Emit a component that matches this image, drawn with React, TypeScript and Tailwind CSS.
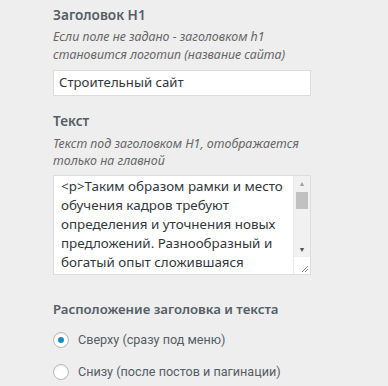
import React from "react";

const font = { fontFamily: '"Noto Sans", "Open Sans", sans-serif' };
const narrow = { fontFamily: 'Roboto, "Noto Sans", sans-serif' };

function Radio({ label, checked }: { label: string; checked?: boolean }) {
  return (
    <label className="flex items-center gap-[9px] h-[20px]">
      <span className="w-[16px] h-[16px] rounded-full border border-[#b4b9be] bg-white flex items-center justify-center shadow-[inset_0_1px_2px_rgba(0,0,0,0.1)]">
        {checked && <span className="w-[6px] h-[6px] rounded-full bg-[#1e8cbe]" />}
      </span>
      <span className="text-[12.6px] text-[#555d66]" style={narrow}>
        {label}
      </span>
    </label>
  );
}

function FakeTextarea({ text }: { text: string }) {
  return (
    <div className="flex h-[100px] w-[258px] border border-[#ddd] bg-white overflow-hidden">
      <div className="flex-1 pl-[7px] pt-[1px] pr-[4px] text-[13.4px] leading-[19px] text-[#32373c] overflow-hidden">
        {text}
      </div>
      <div className="w-[17px] flex flex-col bg-[#f1f1f1] border-l border-[#e8e8e8]">
        <div className="h-[14px] flex items-center justify-center text-[#a3a3a3] text-[7px] pt-[3px]">▲</div>
        <div className="mx-[2px] mt-[2px] h-[17px] bg-[#c1c1c1]" />
        <div className="flex-1" />
        <div className="h-[14px] flex items-center justify-center text-[#505050] text-[7px]">▼</div>
        <div className="h-[17px] bg-white flex items-end justify-end pr-[1px] pb-[1px]">
          <svg width="9" height="9" viewBox="0 0 9 9">
            <path d="M8 2 L2 8 M8 5 L5 8" stroke="#888" strokeWidth="1" />
          </svg>
        </div>
      </div>
    </div>
  );
}

export default function App() {
  return (
    <div className="w-[388px] h-[386px] bg-[#eeeeee] pl-[53px] pt-[5px]" style={font}>
      <div className="text-[13.6px] leading-[20px] font-semibold text-[#555d66]">Заголовок H1</div>
      <div className="mt-[3px] text-[12.4px] leading-[18px] italic text-[#666]">
        Если поле не задано - заголовком h1
        <br />
        становится логотип (название сайта)
      </div>
      <div className="mt-[6px] h-[26px] w-[258px] border border-[#ddd] bg-white flex items-center pl-[5px] text-[13.2px] text-[#32373c]">
        Строительный сайт
      </div>
      <div className="mt-[15px] text-[13.6px] leading-[20px] font-semibold text-[#555d66]">Текст</div>
      <div className="mt-[4px] text-[12.4px] leading-[17px] italic text-[#666]">
        Текст под заголовком H1, отображается
        <br />
        только на главной
      </div>
      <div className="mt-[6px]">
        <FakeTextarea text="<p>Таким образом рамки и место обучения кадров требуют определения и уточнения новых предложений. Разнообразный и богатый опыт сложившаяся" />
      </div>
      <div className="mt-[24px] text-[13.2px] leading-[20px] font-semibold text-[#555d66]">
        Расположение заголовка и текста
      </div>
      <div className="mt-[11px] flex flex-col gap-[12px]">
        <Radio label="Сверху (сразу под меню)" checked />
        <Radio label="Снизу (после постов и пагинации)" />
      </div>
    </div>
  );
}
